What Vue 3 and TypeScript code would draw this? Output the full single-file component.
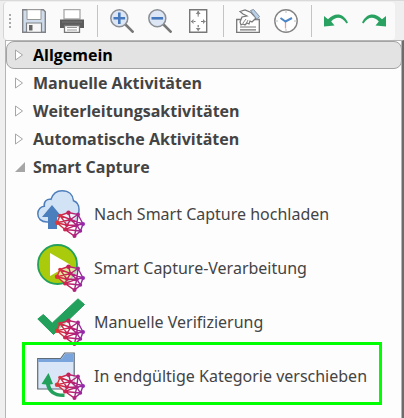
<script setup lang="ts">
import { ref } from 'vue'

interface Group {
  label: string
  open: boolean
}

interface Activity {
  icon: 'upload' | 'play' | 'check' | 'folder'
  label: string
}

const groups = ref<Group[]>([
  { label: 'Allgemein', open: false },
  { label: 'Manuelle Aktivitäten', open: false },
  { label: 'Weiterleitungsaktivitäten', open: false },
  { label: 'Automatische Aktivitäten', open: false },
  { label: 'Smart Capture', open: true },
])

const activities: Activity[] = [
  { icon: 'upload', label: 'Nach Smart Capture hochladen' },
  { icon: 'play', label: 'Smart Capture-Verarbeitung' },
  { icon: 'check', label: 'Manuelle Verifizierung' },
  { icon: 'folder', label: 'In endgültige Kategorie verschieben' },
]

const selected = ref(0)
const highlighted = 3
</script>

<template>
  <div class="window">
    <div class="toolbar" role="toolbar">
      <span class="grip"><i></i><i></i><i></i><i></i></span>
      <button type="button" class="tool" aria-label="Speichern">
        <svg viewBox="0 0 24 24">
          <path d="M.7.7h20.600l2 2v20.600H.7z" fill="#cfdcec" stroke="#808285" stroke-width="1.400" />
          <path d="M5 .7h14v9.800H5z" fill="#fff" stroke="#989898" />
          <path d="M4.500 14h15v9.300h-15z" fill="#f7f7f7" stroke="#808285" stroke-width="1.200" />
          <path d="M7 16h3.500v5.500H7z" fill="#666" />
        </svg>
      </button>
      <button type="button" class="tool" aria-label="Drucken">
        <svg viewBox="0 0 24 24">
          <path d="M4 .7h16V10H4z" fill="#fff" stroke="#aaa" stroke-width="1.300" />
          <path d="M0 10.500h24V19H0z" fill="#5c5c5c" />
          <path d="M2 13h20" stroke="#777" />
          <path d="M4.500 16.500h15v6.800h-15z" fill="#fff" stroke="#777" stroke-width="1.300" />
          <path d="M7 18.500h10M7 21h10" stroke="#999" />
        </svg>
      </button>
      <span class="divider"></span>
      <button type="button" class="tool" aria-label="Vergrößern">
        <svg viewBox="0 0 24 24">
          <path d="m15 15 8.500 8.500" stroke="#777" stroke-width="2.600" />
          <circle cx="9.300" cy="9.300" r="8.500" fill="#dce6f4" stroke="#8b8f94" stroke-width="1.500" />
          <path d="M3.500 9.300h11.600M9.300 3.500v11.600" stroke="#4578bd" stroke-width="2.600" />
        </svg>
      </button>
      <button type="button" class="tool" aria-label="Verkleinern">
        <svg viewBox="0 0 24 24">
          <path d="m15 15 8.500 8.500" stroke="#777" stroke-width="2.600" />
          <circle cx="9.300" cy="9.300" r="8.500" fill="#dce6f4" stroke="#8b8f94" stroke-width="1.500" />
          <path d="M3.500 9.300h11.600" stroke="#4578bd" stroke-width="2.600" />
        </svg>
      </button>
      <button type="button" class="tool" aria-label="Einpassen">
        <svg viewBox="0 0 24 24">
          <path d="M3.700.7h17v22.600h-17z" fill="#fff" stroke="#777" stroke-width="1.400" />
          <path d="M12.200 2v6M12.200 16v6M5 12.500h4.500M15 12.500h4.500" stroke="#777" stroke-width="1.200" stroke-dasharray="2 .7" />
          <path d="m9.700 5 2.500-3 2.500 3zM9.700 19l2.500 3 2.500-3zM7.500 10 5 12.500 7.500 15zM17 10l2.500 2.500L17 15z" fill="#888" />
        </svg>
      </button>
      <span class="divider"></span>
      <button type="button" class="tool" aria-label="Übergeben">
        <svg viewBox="0 0 24 24">
          <path d="M.7 10.500h22.600v12.800H.7z" fill="#fff" stroke="#777" stroke-width="1.300" />
          <path d="M4 18h16M4 20.800h16" stroke="#777" stroke-width="1.200" />
          <path d="M4 2.500 9 1l6 2.500 5 5.500-4 4-2-1-1 3-2-1-2 2-2-1-2 1-1-3 2-5 5-1-4-2z" fill="#fff" stroke="#777" stroke-width="1.200" />
          <path d="m7 14 3-4M10 15l2-4" stroke="#888" />
          <path d="m14.500 1.500 3-1 6 7-2.500 3z" fill="#b9d0e6" stroke="#8192a5" />
        </svg>
      </button>
      <button type="button" class="tool" aria-label="Verlauf">
        <svg viewBox="0 0 24 24">
          <circle cx="12" cy="12" r="11.200" fill="#fff" stroke="#858585" stroke-width="1.400" />
          <path d="M12 2v2M12 20v2M2 12h2M20 12h2" stroke="#bbb" />
          <path d="M11.500 12v7.500" stroke="#e6a09b" stroke-width="1.300" />
          <path d="m6.500 9 5 3.500L18 9" fill="none" stroke="#4e86c6" stroke-width="2" />
        </svg>
      </button>
      <span class="divider"></span>
      <button type="button" class="tool" aria-label="Rückgängig">
        <svg viewBox="0 0 24 24">
          <path d="M0 7v10.500l10.500-1-3.300-4C12 7.200 18 7.500 22.500 14.500l1.500-1C19.500 4 11 3 4 10.200z" fill="#29a261" />
        </svg>
      </button>
      <button type="button" class="tool" aria-label="Wiederholen">
        <svg viewBox="0 0 24 24">
          <path d="M24 7v10.500l-10.500-1 3.300-4C12 7.200 6 7.500 1.500 14.500L0 13.500C4.500 4 13 3 20 10.200z" fill="#29a261" />
        </svg>
      </button>
    </div>

    <main class="panel">
      <button
        v-for="(group, index) in groups"
        :key="group.label"
        type="button"
        class="group"
        :class="{ selected: selected === index }"
        :aria-expanded="group.open"
        @click="selected = index"
      >
        <svg class="arrow" viewBox="0 0 10 12">
          <path v-if="group.open" d="M10 1v10H0z" fill="#a6a6a6" />
          <path v-else d="M.5 1v10L7.500 6z" fill="#fff" stroke="#a6a6a6" />
        </svg>
        <span>{{ group.label }}</span>
      </button>

      <ul class="activities">
        <li v-for="(item, index) in activities" :key="item.label" :class="{ marked: index === highlighted }">
          <a href="#" class="activity" @click.prevent>
            <svg class="picture" viewBox="0 0 48 48">
              <defs>
                <linearGradient :id="'mesh' + index" gradientUnits="userSpaceOnUse" x1="18" y1="0" x2="48" y2="0">
                  <stop offset="0" stop-color="#e33b32" />
                  <stop offset=".45" stop-color="#c41f5b" />
                  <stop offset="1" stop-color="#8e2bb5" />
                </linearGradient>
              </defs>
              <g v-if="item.icon === 'upload'">
                <path
                  d="M10 32C4 32 .8 28.500.8 23.800c0-4.300 3-7.300 6.500-7.600C6.500 11.500 10 8.500 14 9.300 16 3 20 .8 25 .8c7 0 11 4.200 11.500 10 3.500 1.200 5.500 4.500 5.500 8.700C42 27 38 32 31 32z"
                  fill="#d3e3f6" stroke="#4f7fbb" stroke-width="1.500"
                />
                <path d="m15 15 10 12h-5v12h-9V27H5z" fill="#4a7ebc" />
              </g>
              <g v-else-if="item.icon === 'play'">
                <circle cx="20.500" cy="20.500" r="19.500" fill="#aacb0b" stroke="#23a05b" stroke-width="1.800" />
                <path d="M13 9v23l20-11.500z" fill="#fff" />
              </g>
              <path v-else-if="item.icon === 'check'" d="m.8 21 5.500-4.500 9 8.500L41 .8l6.500 5.700L16.500 36.500z" fill="#23a05b" stroke="#23a05b" stroke-linejoin="round" />
              <g v-else>
                <path d="M.7 6.500h23l4-5.500h9.500v36H.7z" fill="#d8e6f7" stroke="#606b78" stroke-width="1.200" />
                <path d="M1.300 7h23l4-5.300h8.300V10H1.300z" fill="#79a5dc" />
                <path d="m11.500 21-7 11 4.500.5c1.500 8 8 13 18.500 12.500v-3.500C19 42 14.500 39 13 32.500l3-.5z" fill="#23a05b" />
              </g>
              <path d="m23 25.500 8.500-3 9.500 2 5 9.500-2.500 7-6 5-9.500-6.500-8-6.800z" fill="#fff" fill-opacity=".6" />
              <g :stroke="`url(#mesh${index})`" fill="none" stroke-width="1.400">
                <path d="m23 25.500 8.500-3 9.500 2 5 9.500-2.500 7-6 5-9.500-6.500-8-6.800zM23 25.500l10.500 4L41 24.500l-1.300 10.700L46 34M31.500 22.500l2 7 6.200 5.700 3.800 5.800-6 5 2.200-10.800M20 32.700l10 2.600 9.700-.1M20 32.700l13.500-3.200-3.500 5.800-2 4.200 11.700-4.300M23 25.500l7 9.800M33.500 29.500 46 34M28 39.500l15.500 1.500" />
              </g>
              <g :fill="`url(#mesh${index})`">
                <circle cx="23" cy="25.500" r="1.800" />
                <circle cx="31.500" cy="22.700" r="2.200" />
                <circle cx="41" cy="24.500" r="1.900" />
                <circle cx="46" cy="34" r="2" />
                <circle cx="43.500" cy="41" r="1.700" />
                <circle cx="37.500" cy="46" r="2" />
                <circle cx="28" cy="39.500" r="2" />
                <circle cx="20" cy="32.700" r="2.200" />
                <circle cx="33.500" cy="29.500" r="1.700" />
                <circle cx="39.700" cy="35.200" r="2" />
                <circle cx="30" cy="35.300" r="1.700" />
              </g>
            </svg>
            <span>{{ item.label }}</span>
          </a>
        </li>
      </ul>
    </main>
  </div>
</template>

<style>
body {
  background: #efefef;
}
</style>

<style scoped>
.window {
  box-sizing: border-box;
  display: flex;
  flex-direction: column;
  min-height: 100vh;
  padding: 1px 0 0 3px;
  border-top: 1px solid #dadada;
  font-family: 'Open Sans', 'Noto Sans', sans-serif;
  color: #444;
}

button {
  padding: 0;
  border: 0;
  background: none;
  font: inherit;
  color: inherit;
}

.toolbar {
  display: flex;
  align-items: center;
  height: 38px;
  margin-right: 9px;
  padding-left: 5px;
  border-left: 1px solid #d5d5d5;
  border-radius: 4px;
  background: #fafafa;
}

.grip {
  display: grid;
  gap: 2px;
  margin-right: 4px;
}

.grip i {
  width: 2px;
  height: 2px;
  background: #aaa;
}

.tool {
  display: flex;
  padding: 0 7px;
}

.tool svg {
  width: 24px;
  height: 24px;
}

.divider {
  width: 1px;
  height: 32px;
  margin: 0 5px 0 6px;
  background: #c4c4c4;
}

.panel {
  flex: 1;
  margin-left: 2px;
  border: 1px solid #b5b5b5;
  border-right: 2px solid #6c6c6c;
  border-bottom: 0;
  background: #fdfdfd;
  box-shadow: inset -1px 0 #b5b5b5;
}

.group {
  box-sizing: border-box;
  display: flex;
  align-items: center;
  gap: 8px;
  width: 100%;
  height: 28px;
  padding-left: 8px;
  border: 1px solid transparent;
  border-radius: 8px;
  font-size: 16px;
  font-weight: 700;
  text-align: left;
}

.group.selected {
  border-color: #a3a3a3;
  background: #e3e3e3;
  color: #000;
}

.arrow {
  width: 10px;
  height: 12px;
}

.activities {
  margin: 0;
  padding: 6px 20px 12px 16px;
  list-style: none;
}

.activity {
  display: flex;
  align-items: center;
  gap: 9px;
  height: 54px;
  padding-left: 15px;
  color: inherit;
  font-family: 'Noto Sans', 'Open Sans', sans-serif;
  font-size: 16px;
  text-decoration: none;
  white-space: nowrap;
}

.picture {
  width: 48px;
  height: 48px;
}

.marked {
  position: relative;
}

.marked::after {
  content: '';
  position: absolute;
  inset: -7px 0 -2px;
  border: 3px solid #0f0;
  pointer-events: none;
}
</style>
